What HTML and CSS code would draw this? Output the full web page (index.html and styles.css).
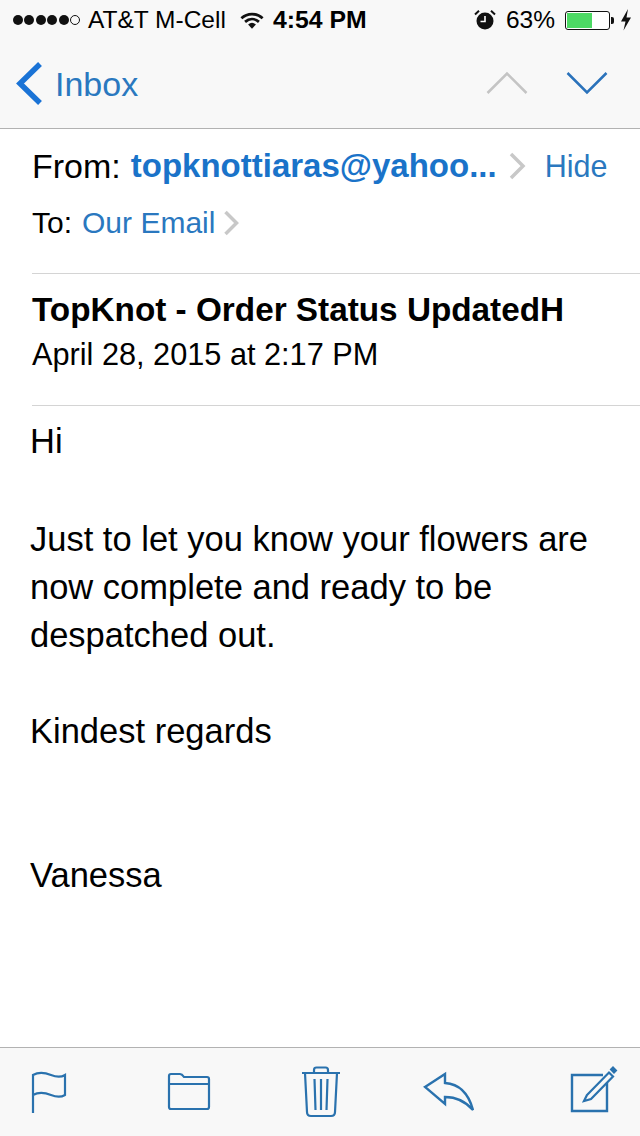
FILE: index.html
```html
<!DOCTYPE html>
<html lang="en">
<head>
<meta charset="utf-8">
<title>Mail</title>
<link rel="stylesheet" href="styles.css">
</head>
<body>
<div class="screen">
  <header class="top">
    <div class="status">
      <div class="status-left">
        <div class="signal"><i class="dot"></i><i class="dot"></i><i class="dot"></i><i class="dot"></i><i class="dot"></i><i class="dot empty"></i></div>
        <span class="carrier">AT&amp;T M-Cell</span>
        <svg class="wifi" width="24" height="19" viewBox="0 0 26 20"><path d="M1.5 7.5C8 1.5 18 1.5 24.5 7.5M5.5 11.5C10 7.5 16 7.5 20.5 11.5" fill="none" stroke="#111" stroke-width="3"/><path d="M8.8 14.2C11.5 12 14.5 12 17.2 14.2L13 19Z" fill="#111"/></svg>
      </div>
      <span class="time">4:54 PM</span>
      <div class="status-right">
        <svg class="alarm" width="22" height="22" viewBox="0 0 22 22"><circle cx="11" cy="12" r="8.5" fill="#111"/><path d="M11 7v5.5H6.5" fill="none" stroke="#fff" stroke-width="1.6"/><path d="M1 5.5L5 1.8M21 5.5L17 1.8" stroke="#111" stroke-width="2"/></svg>
        <span class="pct">63%</span>
        <div class="battery"><div class="battery-fill"></div></div>
        <i class="battery-tip"></i>
        <svg class="bolt" width="12" height="22" viewBox="0 0 12 22"><path d="M8 0L1 12.5H5.5L3.5 21.5L11 8.5H6.5Z" fill="#111"/></svg>
      </div>
    </div>
    <nav class="nav">
      <div class="back">
        <svg width="28" height="44" viewBox="0 0 28 44"><path d="M25 3L5 22.500L25 42" fill="none" stroke="#1a73d6" stroke-width="5.500"/></svg>
        <span class="back-label">Inbox</span>
      </div>
      <div class="arrows">
        <svg width="42" height="24" viewBox="0 0 42 24"><path d="M1.500 22L21 2.500L40.500 22" fill="none" stroke="#c4c4c4" stroke-width="2.500"/></svg>
        <svg width="42" height="24" viewBox="0 0 42 24"><path d="M1.500 2L21 21.500L40.500 2" fill="none" stroke="#2a72bb" stroke-width="2.500"/></svg>
      </div>
    </nav>
  </header>

  <main class="mail">
    <section class="block addr">
      <div class="from-row">
        <span class="label">From:</span>
        <span class="sender">topknottiaras@yahoo...</span>
        <svg class="chev" width="18" height="28" viewBox="0 0 18 28"><path d="M3 2L15 14L3 26" fill="none" stroke="#c8c8c8" stroke-width="3.500"/></svg>
        <span class="hide">Hide</span>
      </div>
      <div class="to-row">
        <span class="label">To:</span>
        <span class="recipient">Our Email</span>
        <svg class="chev" width="16" height="26" viewBox="0 0 16 26"><path d="M2.500 2L13.500 13L2.500 24" fill="none" stroke="#c8c8c8" stroke-width="3.500"/></svg>
      </div>
    </section>
    <section class="block subject-block">
      <h1 class="subject">TopKnot - Order Status UpdatedH</h1>
      <p class="date">April 28, 2015 at 2:17 PM</p>
    </section>
    <article class="body-text">
      <p>Hi</p>
      <p class="gap-first">Just to let you know your flowers are<br>now complete and ready to be<br>despatched out.</p>
      <p class="gap">Kindest regards</p>
      <p class="gap2">Vanessa</p>
    </article>
  </main>

  <footer class="toolbar">
    <svg class="tool tool-flag" width="36" height="52" viewBox="0 0 36 52"><path d="M2 47V9C9 5 15 7 20 9S29 12 34 9V29C29 32 25 31 20 29S9 25 2 29" fill="none" stroke="#2a72ae" stroke-width="2.200"/></svg>
    <svg class="tool tool-folder" width="44" height="52" viewBox="0 0 44 52"><path d="M2 18V10Q2 8 4 8H13Q15 8 17 11H40Q42 11 42 13V41Q42 43 40 43H4Q2 43 2 41V18H42" fill="none" stroke="#2a72ae" stroke-width="2.200"/></svg>
    <svg class="tool tool-trash" width="40" height="52" viewBox="0 0 40 52"><path d="M1 7H39M13 7V4Q13 1.500 15.500 1.500H24.500Q27 1.500 27 4V7M4 7L6 46Q6 50 10 50H30Q34 50 34 46L36 7M13.500 13L14.500 44M20 13V44M26.500 13L25.500 44" fill="none" stroke="#2a72ae" stroke-width="2.200"/></svg>
    <svg class="tool tool-reply" width="52" height="52" viewBox="0 0 52 52"><path d="M2 21L22 8V17C37 18 46 29 50 44C43 36 34 31 22 31V38Z" fill="none" stroke="#2a72ae" stroke-width="2.400"/></svg>
    <svg class="tool tool-compose" width="48" height="52" viewBox="0 0 48 52"><path d="M33 9H2V45H37V17" fill="none" stroke="#2a72ae" stroke-width="2.400"/><path d="M17 29L39 6.500L43 10.500L21 33L14 35Z" fill="none" stroke="#2a72ae" stroke-width="2.200"/><path d="M41 3.500L43 1.500L46 4.500L44 6.500Z" fill="#2a72ae" stroke="#2a72ae" stroke-width="2"/></svg>
  </footer>
</div>
</body>
</html>
```
FILE: styles.css
```css
* { box-sizing: border-box; }
html, body { margin: 0; padding: 0; background: #fff; }
body { font-family: "Liberation Sans", Arial, sans-serif; color: #000; }
p, h1 { margin: 0; }
.screen { width: 640px; height: 1136px; display: flex; flex-direction: column; overflow: hidden; }

.top { height: 129px; flex: none; background: #f8f8f8; border-bottom: 1px solid #b2b2b2; }
.status { height: 40px; position: relative; display: flex; align-items: center; justify-content: space-between; padding: 0 8px 0 13px; font-size: 24.5px; }
.status-left { display: flex; align-items: center; }
.signal { display: flex; gap: 1.4px; margin-right: 8px; }
.dot { width: 10px; height: 10px; border-radius: 50%; background: #111; }
.dot.empty { background: none; border: 1px solid #111; }
.wifi { margin-left: 14px; }
.time { position: absolute; left: 273px; font-weight: 700; font-size: 24.8px; }
.status-right { display: flex; align-items: center; }
.alarm { margin-right: 10px; }
.pct { margin-right: 10px; }
.battery { width: 45px; height: 19px; border: 1px solid #111; border-radius: 3px; padding: 1px; background: #fff; }
.battery-fill { width: 62%; height: 100%; background: #4cd964; }
.battery-tip { width: 3px; height: 7px; margin: 0 6px 0 1px; background: #111; border-radius: 0 2px 2px 0; }

.nav { height: 88px; display: flex; align-items: center; justify-content: space-between; padding: 0 32px 2px 15px; }
.back { display: flex; align-items: center; gap: 12px; }
.back-label { font-size: 34px; color: #2a78bf; position: relative; top: 1px; }
.arrows { display: flex; gap: 38px; }

.mail { flex: 1; min-height: 0; background: #fff; }
.block { margin-left: 32px; }
.addr { height: 145px; border-bottom: 1px solid #d4d4d4; padding-top: 18px; }
.from-row { display: flex; align-items: center; height: 38px; font-size: 34px; white-space: nowrap; }
.sender { margin-left: 10px; font-weight: 700; color: #1a73c9; font-size: 33px; }
.from-row .chev { margin-left: 11px; }
.hide { margin-left: 19px; font-size: 30.500px; color: #2a78bf; }
.to-row { display: flex; align-items: center; height: 38px; margin-top: 19px; font-size: 30px; }
.recipient { margin-left: 10px; color: #2a78bf; }
.to-row .chev { margin-left: 8px; }

.subject-block { height: 132px; border-bottom: 1px solid #d4d4d4; padding-top: 15px; }
.subject { font-size: 33.300px; line-height: 42px; font-weight: 700; }
.date { font-size: 30.700px; line-height: 40px; margin-top: 4px; }

.body-text { margin-left: 30px; padding-top: 11px; font-size: 34.500px; line-height: 48px; }
.gap-first { margin-top: 50px; }
.gap { margin-top: 48px; }
.gap2 { margin-top: 96px; }

.toolbar { height: 89px; flex: none; background: #f8f8f8; border-top: 1px solid #b2b2b2; display: flex; align-items: flex-start; padding: 18px 0 0 31px; }
.tool-folder { margin-left: 100px; }
.tool-trash { margin-left: 90px; }
.tool-reply { margin-left: 82px; }
.tool-compose { margin-left: 95px; }
```
